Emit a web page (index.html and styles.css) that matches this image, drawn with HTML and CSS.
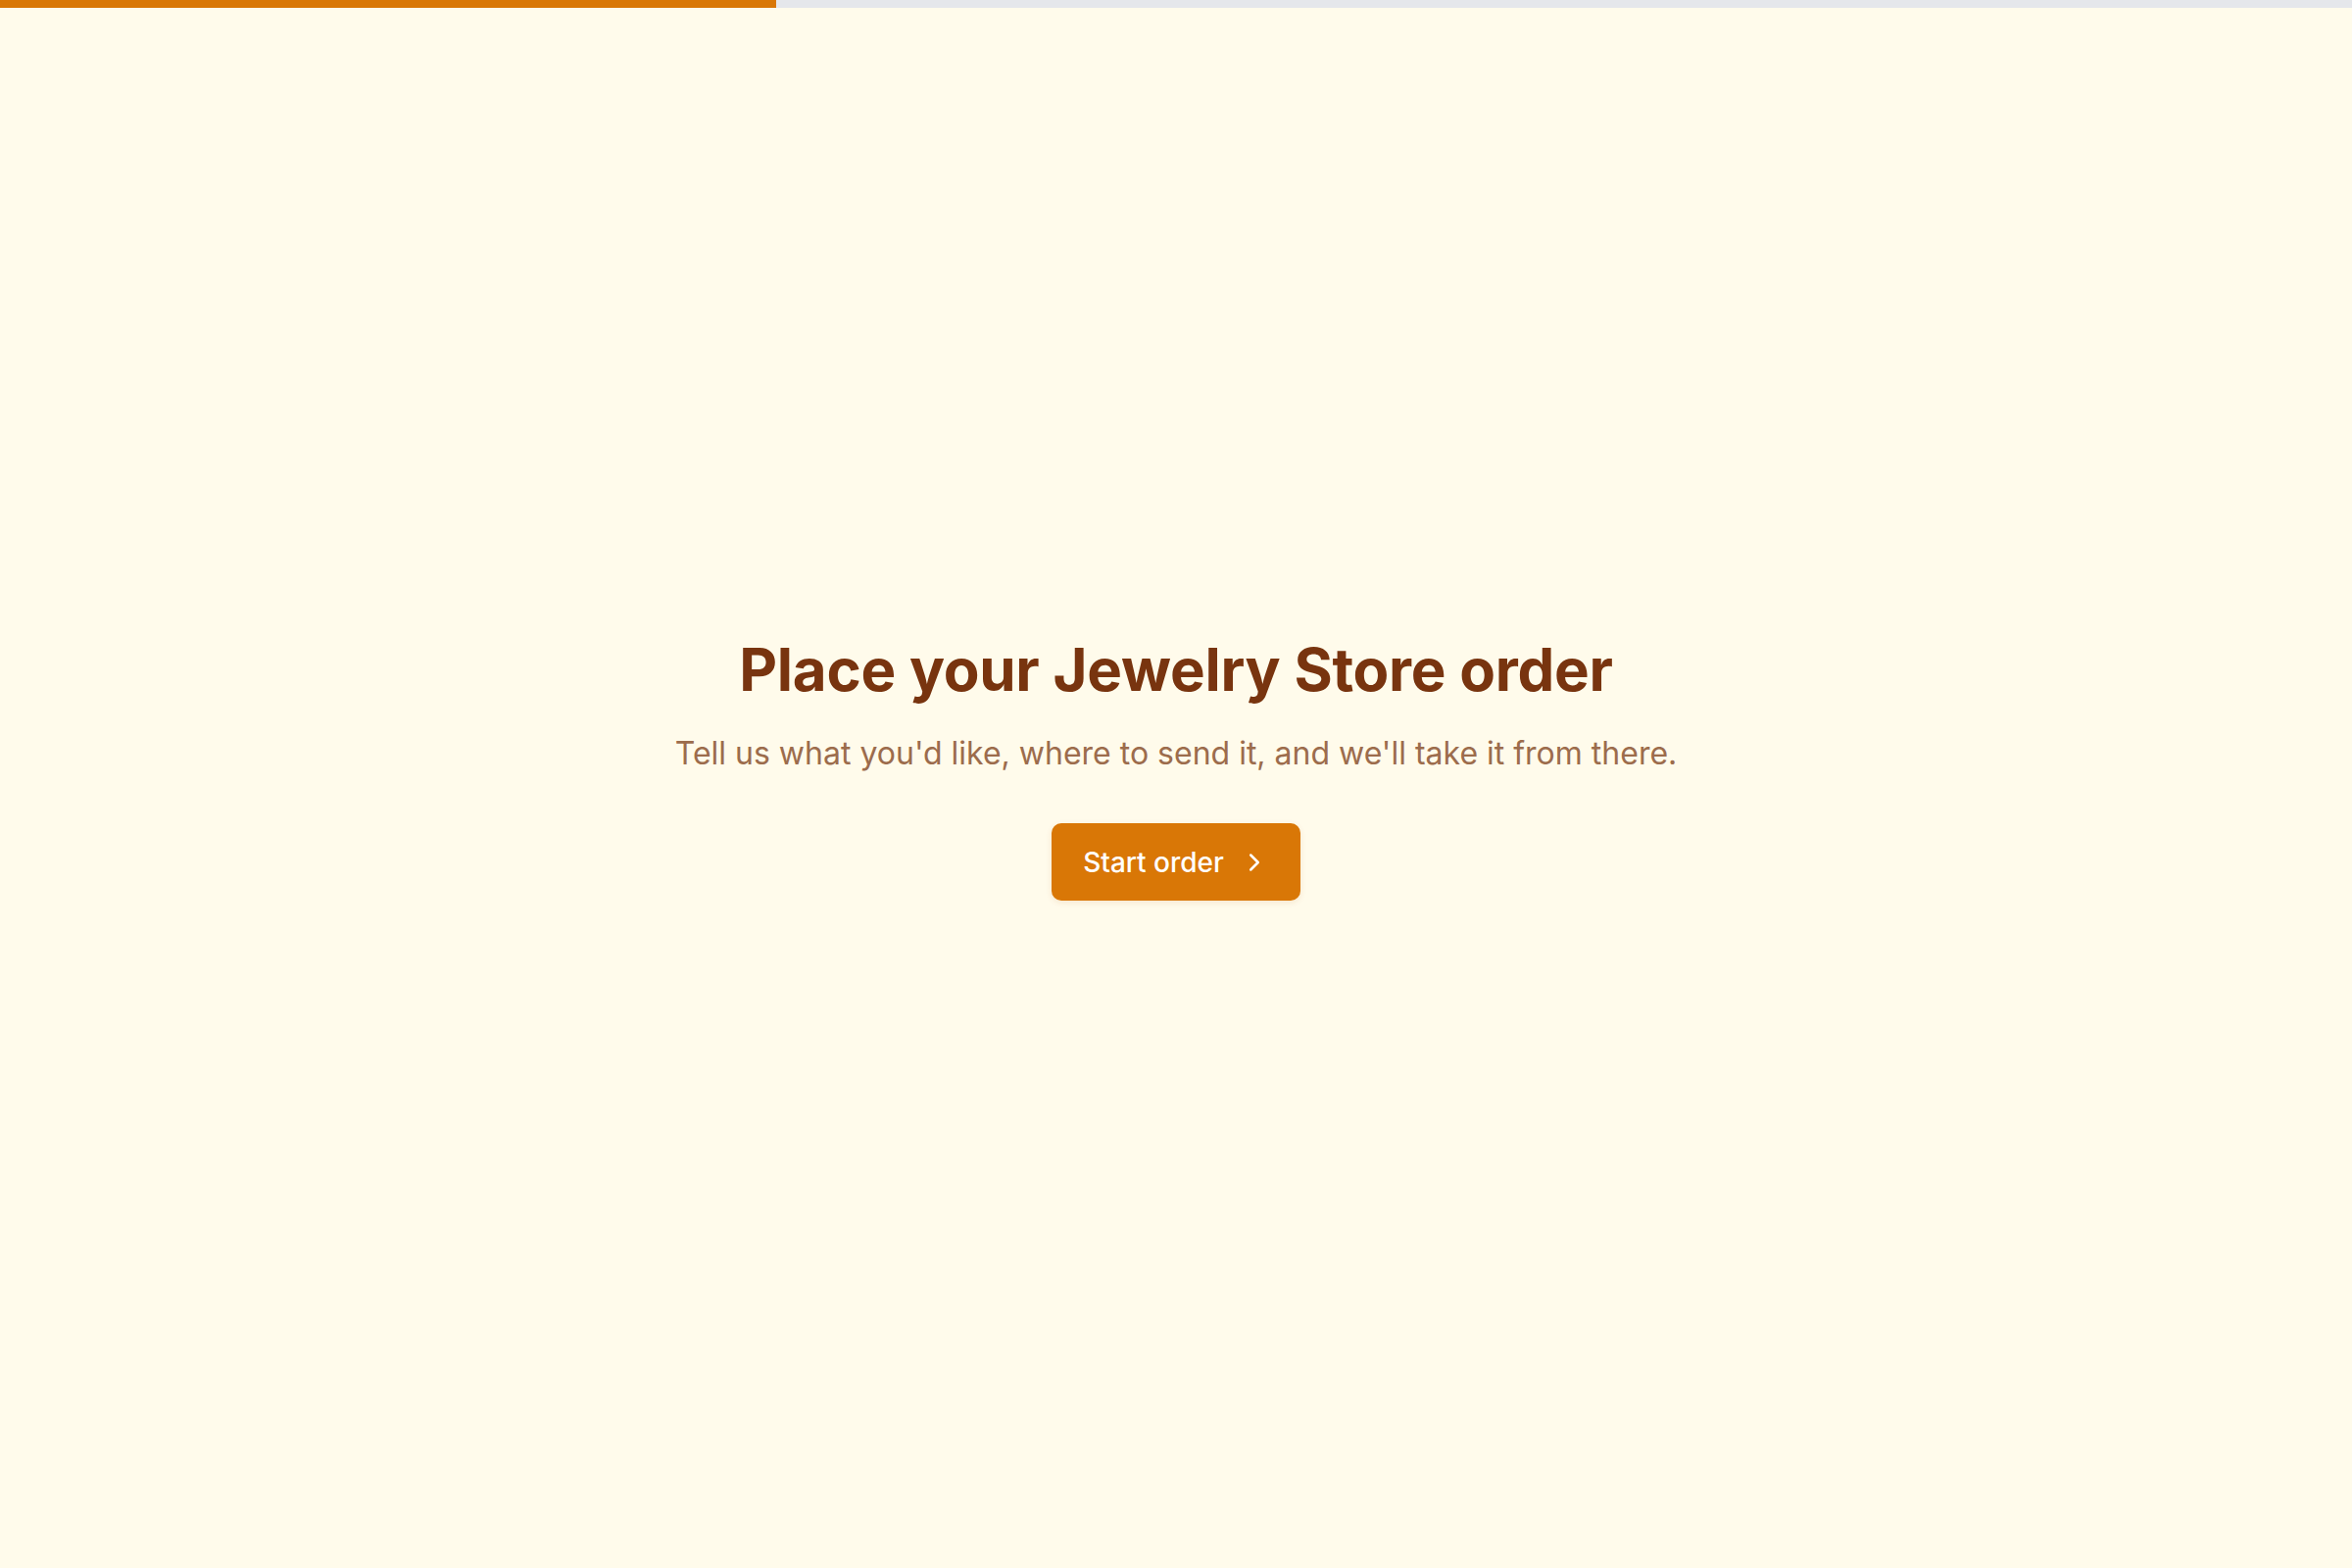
FILE: index.html
```html
<!DOCTYPE html>
<html lang="en">
<head>
<meta charset="utf-8">
<title>Jewelry Store order</title>
<link rel="stylesheet" href="styles.css">
</head>
<body>
<div class="progress"><div class="progress-fill" style="width:33%"></div></div>
<main class="hero">
  <h1 class="title">Place your Jewelry Store order</h1>
  <p class="subtitle">Tell us what you'd like, where to send it, and we'll take it from there.</p>
  <button class="start-btn" type="button">
    <span>Start order</span>
    <svg class="chev" viewBox="0 0 24 24" fill="none" stroke="currentColor" stroke-width="2" stroke-linecap="round" stroke-linejoin="round"><path d="m9 18 6-6-6-6"/></svg>
  </button>
</main>
</body>
</html>
```
FILE: styles.css
```css
html, body {
  margin: 0;
  padding: 0;
}
body {
  background: #fffbeb;
  font-family: Inter, "Noto Sans", sans-serif;
  min-height: 100vh;
}
.progress {
  height: 8px;
  background: #e5e7eb;
}
.progress-fill {
  height: 100%;
  background: #d97706;
}
.hero {
  min-height: calc(100vh - 8px);
  box-sizing: border-box;
  display: flex;
  flex-direction: column;
  align-items: center;
  justify-content: center;
  padding-bottom: 42px;
  text-align: center;
}
.title {
  margin: 0;
  font-size: 60px;
  line-height: 1.2;
  font-weight: 700;
  color: #78340f;
  letter-spacing: -0.25px;
}
.subtitle {
  margin: 26px 0 0;
  font-size: 32px;
  line-height: 1.5;
  color: #9c6c4c;
}
.start-btn {
  margin-top: 47px;
  display: flex;
  align-items: center;
  gap: 16px;
  height: 79px;
  padding: 0 32px;
  border: none;
  border-radius: 10px;
  background: #d97706;
  color: #ffffff;
  font-family: inherit;
  font-size: 28px;
  font-weight: 500;
  box-shadow: 0 2px 6px rgba(180, 83, 9, 0.12);
  cursor: pointer;
}
.chev {
  width: 30px;
  height: 30px;
}
```
